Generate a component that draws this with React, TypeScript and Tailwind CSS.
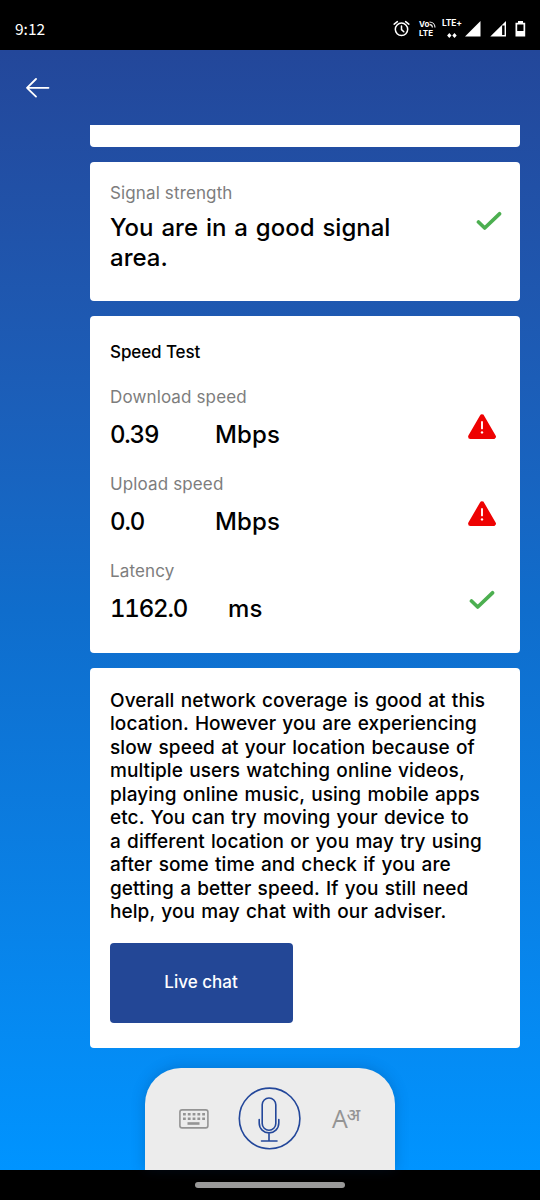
import type { ReactNode } from 'react';

const message = [
    'Overall network coverage is good at this',
    'location. However you are experiencing',
    'slow speed at your location because of',
    'multiple users watching online videos,',
    'playing online music, using mobile apps',
    'etc. You can try moving your device to',
    'a different location or you may try using',
    'after some time and check if you are',
    'getting a better speed. If you still need',
    'help, you may chat with our adviser.',
];

function StatusBar() {
    return (
        <div className="flex h-[50px] shrink-0 items-start bg-black pl-[15px] pt-[19px] text-white">
            <span className="-mt-[1px] w-[378px] font-['Noto_Sans_CJK_SC',sans-serif] text-[15.5px] leading-[20px]">9:12</span>
            <svg className="mt-[1px] h-[17px] w-[17px]" viewBox="0 0 17 17" fill="none" stroke="white" strokeWidth="1.5" strokeLinecap="round">
                <circle cx="8.5" cy="9.3" r="6.2" />
                <path d="M8.5 6v3.6l2.3 2.2M1.2 4.2 4.4 1.6M15.8 4.2l-3.2-2.6" />
            </svg>
            <div className="ml-[9px] w-[18px] font-['Inter'] text-[8px] font-bold leading-[9px]">
                <div className="mt-[1px] flex h-[9px] items-center">
                    Vo
                    <svg className="h-[7px] w-[7px] shrink-0" viewBox="0 0 7 7" fill="none" stroke="white" strokeWidth="1.1">
                        <path d="M.5 1C3.7 1 6 3.3 6 6.5M.5 3.6C2.2 3.6 3.4 4.8 3.4 6.5" />
                    </svg>
                </div>
                <div>LTE</div>
            </div>
            <div className="ml-[5px] w-[20px] font-['Inter'] text-[8.5px] font-bold leading-[9px] tracking-[-0.2px]">
                <div>LTE+</div>
                <svg className="ml-[5px] mt-[5px] h-[5px] w-[10px]" viewBox="0 0 10 5" fill="white">
                    <path d="m2.3 0 2.2 2.5L2.3 5 .1 2.5zM7.5 0l2.2 2.5L7.5 5 5.3 2.5z" />
                </svg>
            </div>
            <svg className="ml-[3px] mt-[2px] h-[16px] w-[16px]" viewBox="0 0 16 16" fill="white">
                <path d="M15.5 0v15.5H0z" />
            </svg>
            <svg className="ml-[9px] mt-[2px] h-[16px] w-[17px]" viewBox="0 0 17 16" fill="white">
                <path fillRule="evenodd" d="M16 0v15.5H.3zM14.6 4.5h-2.5v9.6h2.5z" />
            </svg>
            <svg className="ml-[8px] mt-[2px] h-[16px] w-[11px]" viewBox="0 0 11 16" fill="white">
                <path fillRule="evenodd" d="M3 0h5v1.8h2.2v13.7H.5V1.8H3zM2.2 3.5v6.6h6.3V3.5z" />
            </svg>
        </div>
    );
}

function Check() {
    return (
        <svg className="h-[20px] w-[26px]" viewBox="0 0 26 20" fill="none" stroke="#4caf50" strokeWidth="3.7" strokeLinecap="round" strokeLinejoin="round">
            <path d="m2.5 11 6.200 6L23.500 2.800" />
        </svg>
    );
}

function Warning() {
    return (
        <svg className="mt-[1px] h-[26px] w-[28px]" viewBox="0 0 28 26">
            <path d="M14 2.6 25.6 22.7H2.4z" fill="#ee0202" stroke="#ee0202" strokeWidth="4.6" strokeLinejoin="round" />
            <path d="M14 8v6.4" stroke="white" strokeWidth="1.9" strokeLinecap="round" />
            <circle cx="14" cy="18.4" r="1.2" fill="white" />
        </svg>
    );
}

function Label({ children }: { children: ReactNode }) {
    return <div className="text-[17px] leading-[22px] tracking-[0.13px] text-[#7d7d7d]">{children}</div>;
}

function Metric({ label, value, unit, unitClass, children }: { label: string; value: string; unit: string; unitClass: string; children: ReactNode }) {
    return (
        <div className="flex h-[87px] justify-between pr-[4px]">
            <div>
                <Label>{label}</Label>
                <div className="mt-[12px] flex text-[24px] font-medium leading-[30px]">
                    <span className={unitClass}>{value}</span>
                    <span className="tracking-[0.15px]">{unit}</span>
                </div>
            </div>
            <div className="flex w-[28px] items-start justify-center pt-[27px]">{children}</div>
        </div>
    );
}

export default function App() {
    return (
        <div className="flex h-[1200px] w-[540px] flex-col overflow-hidden bg-black font-['Inter',sans-serif] text-black">
            <StatusBar />
            <main className="flex h-[1120px] flex-col bg-linear-to-b from-[#23479a] via-[#0f6dcc] via-50% to-[#0094ff]">
                <div className="h-[75px] shrink-0 pl-[26px] pt-[27px]">
                    <svg className="h-[22px] w-[24px]" viewBox="0 0 24 22" fill="none" stroke="white" strokeWidth="1.8" strokeLinecap="round" strokeLinejoin="round">
                        <path d="M22.5 10.8H1M10 2 1 10.8l9 8.8" />
                    </svg>
                </div>

                <div className="ml-[90px] flex w-[430px] flex-col gap-[15px]">
                    <section className="h-[22px] rounded-b-[4px] bg-white" />

                    <section className="flex h-[139px] justify-between rounded-[4px] bg-white pl-5 pr-[18px] pt-[20px]">
                        <div>
                            <Label>Signal strength</Label>
                            <h2 className="mt-[9px] w-[320px] text-[24px] font-medium leading-[29.5px] [word-spacing:1.5px]">
                                You are in a good signal<br />area.
                            </h2>
                        </div>
                        <div className="pt-[29px]"><Check /></div>
                    </section>

                    <section className="h-[337px] rounded-[4px] bg-white px-5 pt-[25px]">
                        <h3 className="mb-[23px] text-[17px] font-medium leading-[22px] tracking-[-0.1px]">Speed Test</h3>
                        <Metric label="Download speed" value="0.39" unit="Mbps" unitClass="w-[105px] tabular-nums tracking-[-1.2px]"><Warning /></Metric>
                        <Metric label="Upload speed" value="0.0" unit="Mbps" unitClass="w-[105px] tabular-nums tracking-[-1.1px]"><Warning /></Metric>
                        <Metric label="Latency" value="1162.0" unit="ms" unitClass="w-[118px] tabular-nums tracking-[-1.2px]">
                            <div className="pt-[3px]"><Check /></div>
                        </Metric>
                    </section>

                    <section className="h-[380px] rounded-[4px] bg-white px-5 pt-[20.5px]">
                        <p className="whitespace-nowrap text-[19px] font-medium leading-[23.5px] tracking-[0.08px] [word-spacing:1.1px]">
                            {message.map((line) => (
                                <span key={line} className="block">{line}</span>
                            ))}
                        </p>
                        <button className="mt-[19px] h-[80px] w-[183px] rounded-[4px] bg-[#234796] pr-[1px] pt-[1px] text-[17px] font-medium text-white">
                            Live chat
                        </button>
                    </section>
                </div>

                <nav className="mx-auto mt-[20px] flex h-[102px] w-[250px] shrink-0 rounded-t-[36px] bg-[#ececec] shadow-[0_0_14px_rgba(0,40,90,0.25)]">
                    <svg className="ml-[34px] mt-[41px] h-[20px] w-[30px]" viewBox="0 0 30 20" fill="none" stroke="#949494">
                        <rect x=".9" y=".9" width="28" height="18" rx="2.2" strokeWidth="1.6" />
                        <path d="M4 5.2h22.5M4 9.8h22.5" strokeWidth="2.6" strokeDasharray="2.8 2" />
                        <path d="M8.500 14.500h12" strokeWidth="2.600" />
                    </svg>
                    <svg className="ml-[29px] mt-[19px] h-[63px] w-[63px]" viewBox="0 0 63 63" fill="none" stroke="#23479a" strokeWidth="1.6" strokeLinecap="round">
                        <circle cx="31.6" cy="31.4" r="30.3" />
                        <rect x="24.2" y="11" width="13.6" height="32.3" rx="6.8" />
                        <path d="M21.200 32.500V36c0 5.800 4.500 9.900 9.800 9.900s9.800-4.100 9.800-9.900v-3.500M31 45.900V54M23.500 54H39" />
                    </svg>
                    <div className="ml-[31px] mt-[36px] flex text-[#949494]">
                        <span className="font-['Open_Sans'] text-[25px] leading-[28px]">A</span>
                        <span className="-ml-[1px] mt-[1px] font-['Noto_Sans',sans-serif] text-[17px] font-medium leading-[20px] tracking-[-0.5px]">अ</span>
                    </div>
                </nav>
            </main>
            <div className="flex h-[30px] justify-center pt-[12px]">
                <div className="h-[6px] w-[150px] rounded-full bg-[#999]" />
            </div>
        </div>
    );
}
